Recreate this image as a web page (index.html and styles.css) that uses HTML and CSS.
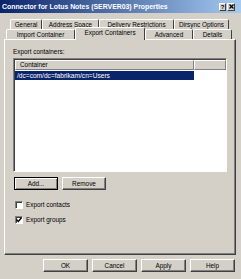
FILE: index.html
```html
<!DOCTYPE html>
<html lang="en">
<head>
    <meta charset="UTF-8">
    <title>Connector for Lotus Notes (SERVER03) Properties</title>
    <link rel="stylesheet" href="styles.css">
</head>
<body>
    <div class="dialog">
        <div class="titlebar">
            <span class="title">Connector for Lotus Notes (SERVER03) Properties</span>
            <div class="caption-buttons">
                <div class="caption-btn">?</div>
                <div class="caption-btn close">
                    <svg width="5" height="5" viewBox="0 0 5 5"><path d="M0.5 0.5 L4.5 4.5 M4.5 0.5 L0.5 4.5" stroke="#000" stroke-width="1.2"/></svg>
                </div>
            </div>
        </div>

        <div class="tabstrip">
            <div class="tab-row back">
                <div class="tab" style="width:32px">General</div>
                <div class="tab" style="width:57px">Address Space</div>
                <div class="tab" style="width:75px">Delivery Restrictions</div>
                <div class="tab" style="width:55px">Dirsync Options</div>
            </div>
            <div class="tab-row front">
                <div class="tab" style="width:69px">Import Container</div>
                <div class="tab active" style="width:70px">Export Containers</div>
                <div class="tab" style="width:48px">Advanced</div>
                <div class="tab" style="width:39px">Details</div>
            </div>
        </div>

        <div class="panel">
            <div class="label">Export containers:</div>
            <div class="listbox">
                <div class="list-header">
                    <div class="col-head first">Container</div>
                    <div class="col-head rest"></div>
                </div>
                <div class="list-row selected">/dc=com/dc=fabrikam/cn=Users</div>
            </div>
            <div class="list-actions">
                <button class="btn focused">Add...</button>
                <button class="btn">Remove</button>
            </div>
            <div class="checks">
                <label class="check-row">
                    <span class="checkbox"></span>
                    <span>Export contacts</span>
                </label>
                <label class="check-row">
                    <span class="checkbox">
                        <svg width="6" height="6" viewBox="0 0 6 6"><path d="M0.5 2.5 L2.3 4.5 L5.5 0.8" fill="none" stroke="#000" stroke-width="1.3"/></svg>
                    </span>
                    <span>Export groups</span>
                </label>
            </div>
        </div>

        <div class="footer">
            <button class="btn">OK</button>
            <button class="btn">Cancel</button>
            <button class="btn">Apply</button>
            <button class="btn">Help</button>
        </div>
    </div>
</body>
</html>
```

FILE: styles.css
```css
body, html {
    margin: 0;
    padding: 0;
    background-color: #d4d0c8;
    font-family: "Liberation Sans", Arial, sans-serif;
    font-size: 6.4px;
    color: #000;
}

.dialog {
    width: 241px;
    height: 279px;
    display: flex;
    flex-direction: column;
    overflow: hidden;
}

/* barra de título */
.titlebar {
    height: 13px;
    display: flex;
    align-items: center;
    justify-content: space-between;
    padding: 0 6px 0 2px;
    background: linear-gradient(to right, #0a246a, #a6caf0);
}

.title {
    color: #fff;
    font-weight: bold;
    font-size: 6.9px;
    white-space: nowrap;
}

.caption-buttons {
    display: flex;
    gap: 1px;
}

.caption-btn {
    width: 5px;
    height: 6px;
    background-color: #d4d0c8;
    border: 1px solid;
    border-color: #fff #404040 #404040 #fff;
    font-weight: bold;
    font-size: 6px;
    line-height: 6px;
    text-align: center;
    display: flex;
    align-items: center;
    justify-content: center;
}

.caption-btn.close {
    width: 6px;
}

/* abas */
.tabstrip {
    margin-top: 6px;
}

.tab-row {
    display: flex;
    height: 10px;
}

.tab-row.back {
    margin-left: 10px;
}

.tab-row.front {
    margin-left: 6px;
    position: relative;
    z-index: 1;
}

.tab {
    box-sizing: border-box;
    height: 10px;
    border: 1px solid;
    border-color: #fff #404040 transparent #fff;
    border-bottom: none;
    border-radius: 2px 2px 0 0;
    text-align: center;
    line-height: 9px;
    white-space: nowrap;
    background-color: #d4d0c8;
}

.tab.active {
    height: 13px;
    margin-top: -2px;
    line-height: 10px;
}

/* painel */
.panel {
    box-sizing: border-box;
    height: 216px;
    margin: 0 5px 0 4px;
    border: 1px solid;
    border-color: #fff #404040 #404040 #fff;
    box-shadow: inset -1px -1px #808080;
    padding: 8px 0 0 8px;
}

.label {
    height: 8px;
    line-height: 8px;
}

.listbox {
    box-sizing: border-box;
    width: 214px;
    height: 114px;
    margin-top: 2px;
    background-color: #fff;
    border: 1px solid;
    border-color: #808080 #fff #fff #808080;
    box-shadow: inset 1px 1px #404040;
    padding: 1px 0 0 1px;
}

.list-header {
    display: flex;
    height: 10px;
}

.col-head {
    box-sizing: border-box;
    background-color: #d4d0c8;
    border: 1px solid;
    border-color: #fff #808080 #808080 #fff;
    line-height: 8px;
    padding-left: 4px;
}

.col-head.first {
    width: 180px;
}

.col-head.rest {
    width: 32px;
}

.list-row {
    width: 179px;
    height: 9px;
    line-height: 9px;
    margin: 1px 0 0 0;
    padding-left: 2px;
    box-sizing: border-box;
    white-space: nowrap;
    font-size: 6.6px;
}

.list-row.selected {
    background-color: #0a246a;
    color: #fff;
}

.list-actions {
    display: flex;
    gap: 4px;
    margin: 5px 0 0 1px;
}

/* botões */
.btn {
    box-sizing: border-box;
    width: 44px;
    height: 13px;
    padding: 0;
    background-color: #d4d0c8;
    border: 1px solid;
    border-color: #fff #404040 #404040 #fff;
    box-shadow: inset -1px -1px #808080;
    font-family: "Liberation Sans", Arial, sans-serif;
    font-size: 6.4px;
    color: #000;
}

.btn.focused {
    border-color: #000;
    box-shadow: inset 1px 1px #fff, inset -1px -1px #808080;
}

.checks {
    display: flex;
    flex-direction: column;
    gap: 6px;
    margin: 10px 0 0 2px;
}

.check-row {
    display: flex;
    align-items: center;
    gap: 3px;
    height: 9px;
}

.checkbox {
    box-sizing: border-box;
    width: 8px;
    height: 8px;
    background-color: #fff;
    border: 1px solid;
    border-color: #808080 #fff #fff #808080;
    box-shadow: inset 1px 1px #404040;
    display: flex;
    align-items: center;
    justify-content: center;
}

.footer {
    display: flex;
    justify-content: flex-end;
    gap: 4px;
    margin-top: 4px;
    padding-right: 6px;
}

.footer .btn {
    width: 45px;
}
```
